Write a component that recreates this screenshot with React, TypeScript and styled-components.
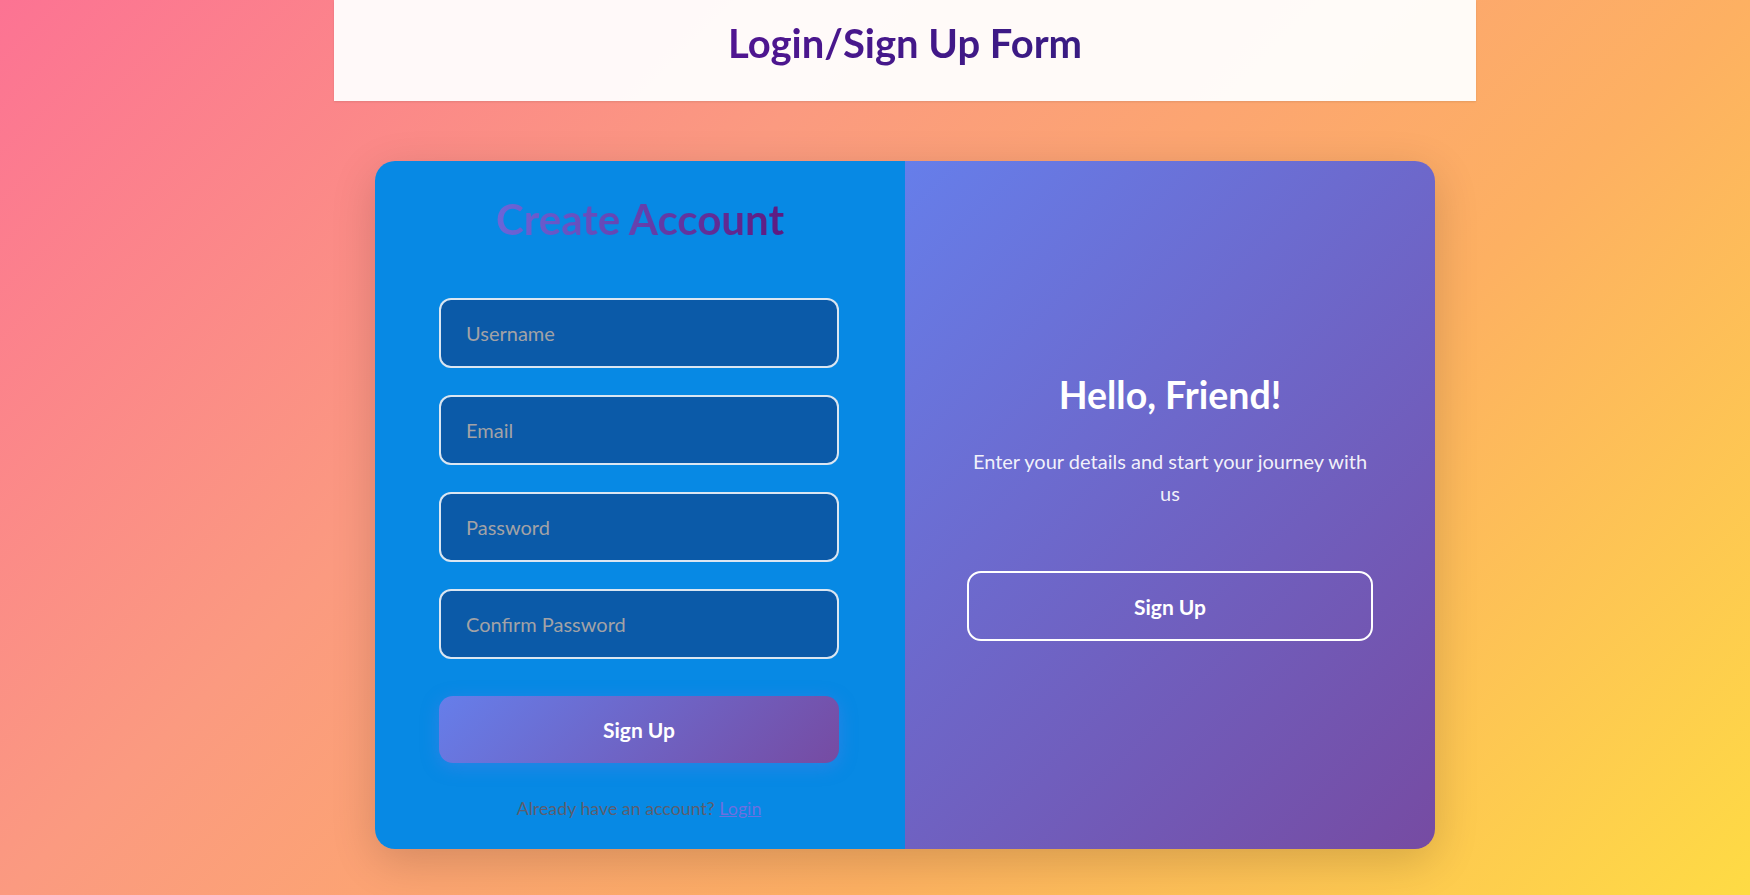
import React from "react";
import styled, { createGlobalStyle } from "styled-components";

const GlobalStyle = createGlobalStyle`
  * { box-sizing: border-box; }
  html, body { margin: 0; padding: 0; }
  body {
    min-height: 100vh;
    font-family: "Lato", "Noto Sans", sans-serif;
    background: linear-gradient(135deg, #fc7393 0%, #fb9a80 34%, #fdb062 66%, #fedb44 100%);
    background-attachment: fixed;
  }
`;

const Page = styled.div`
  min-height: 100vh;
  display: flex;
  flex-direction: column;
  align-items: center;
  padding-left: 60px;
`;

const Header = styled.header`
  width: 1142px;
  height: 101px;
  padding-top: 20px;
  background: rgba(255, 255, 255, 0.95);
  box-shadow: 0 1px 2px rgba(0, 0, 0, 0.1);
  display: flex;
  justify-content: center;
  align-items: flex-start;
`;

const HeaderTitle = styled.h1`
  margin: 0;
  font-size: 40px;
  line-height: 46px;
  font-weight: 700;
  background: linear-gradient(90deg, #501591, #381b82);
  -webkit-background-clip: text;
  background-clip: text;
  color: transparent;
`;

const Card = styled.main`
  margin-top: 60px;
  width: 1060px;
  height: 688px;
  border-radius: 20px;
  overflow: hidden;
  display: grid;
  grid-template-columns: 1fr 1fr;
  box-shadow: 0 12px 45px rgba(0, 0, 0, 0.16);
`;

const FormPanel = styled.section`
  background: #0789e4;
  padding: 34px 0 0 64px;
  display: flex;
  flex-direction: column;
  align-items: flex-start;
`;

const FormTitle = styled.h2`
  align-self: center;
  margin: 0 0 0 -64px;
  font-size: 42px;
  line-height: 48px;
  font-weight: 700;
  background: linear-gradient(90deg, #6c66d8, #5e1a80);
  -webkit-background-clip: text;
  background-clip: text;
  color: transparent;
`;

const Fields = styled.div`
  margin-top: 55px;
  display: flex;
  flex-direction: column;
  gap: 27px;
`;

const Input = styled.input`
  width: 400px;
  height: 70px;
  padding: 0 25px;
  border: 2px solid rgba(255, 255, 255, 0.85);
  border-radius: 12px;
  background: #0b5aa8;
  color: #ffffff;
  font-family: "Lato", "Noto Sans", sans-serif;
  font-size: 20px;
  outline: none;
  &::placeholder {
    color: #a2a2a6;
  }
`;

const PrimaryButton = styled.button`
  margin-top: 37px;
  width: 400px;
  height: 67px;
  border: none;
  border-radius: 14px;
  background: linear-gradient(135deg, #667eea 0%, #764ba2 100%);
  box-shadow: 0 4px 18px rgba(102, 126, 234, 0.35);
  color: #ffffff;
  font-family: "Lato", "Noto Sans", sans-serif;
  font-size: 21px;
  font-weight: 700;
  cursor: pointer;
`;

const Footer = styled.p`
  margin: 32px 0 0 0;
  width: 400px;
  text-align: center;
  font-size: 17.8px;
  line-height: 26px;
  color: #5e5e6e;
`;

const FooterLink = styled.a`
  color: #6d6fe0;
  text-decoration: underline;
  cursor: pointer;
`;

const WelcomePanel = styled.section`
  background: linear-gradient(135deg, #667eea 0%, #764ba2 100%);
  padding: 5px 62px 0;
  display: flex;
  flex-direction: column;
  justify-content: center;
  align-items: center;
  text-align: center;
  color: #ffffff;
`;

const WelcomeTitle = styled.h2`
  margin: 0;
  font-size: 37.5px;
  line-height: 42px;
  font-weight: 700;
`;

const WelcomeText = styled.p`
  margin: 29px 0 0 0;
  max-width: 405px;
  font-size: 20px;
  line-height: 32.4px;
  color: rgba(255, 255, 255, 0.92);
`;

const GhostButton = styled.button`
  margin-top: 62px;
  width: 100%;
  height: 70px;
  border: 2px solid #ffffff;
  border-radius: 14px;
  background: transparent;
  color: #ffffff;
  font-family: "Lato", "Noto Sans", sans-serif;
  font-size: 21px;
  font-weight: 700;
  cursor: pointer;
`;

export default function App() {
  return (
    <>
      <GlobalStyle />
      <Page>
        <Header>
          <HeaderTitle>Login/Sign Up Form</HeaderTitle>
        </Header>
        <Card>
          <FormPanel>
            <FormTitle>Create Account</FormTitle>
            <Fields>
              <Input type="text" placeholder="Username" />
              <Input type="email" placeholder="Email" />
              <Input type="password" placeholder="Password" />
              <Input type="password" placeholder="Confirm Password" />
            </Fields>
            <PrimaryButton type="button">Sign Up</PrimaryButton>
            <Footer>
              Already have an account? <FooterLink>Login</FooterLink>
            </Footer>
          </FormPanel>
          <WelcomePanel>
            <WelcomeTitle>Hello, Friend!</WelcomeTitle>
            <WelcomeText>Enter your details and start your journey with us</WelcomeText>
            <GhostButton type="button">Sign Up</GhostButton>
          </WelcomePanel>
        </Card>
      </Page>
    </>
  );
}
